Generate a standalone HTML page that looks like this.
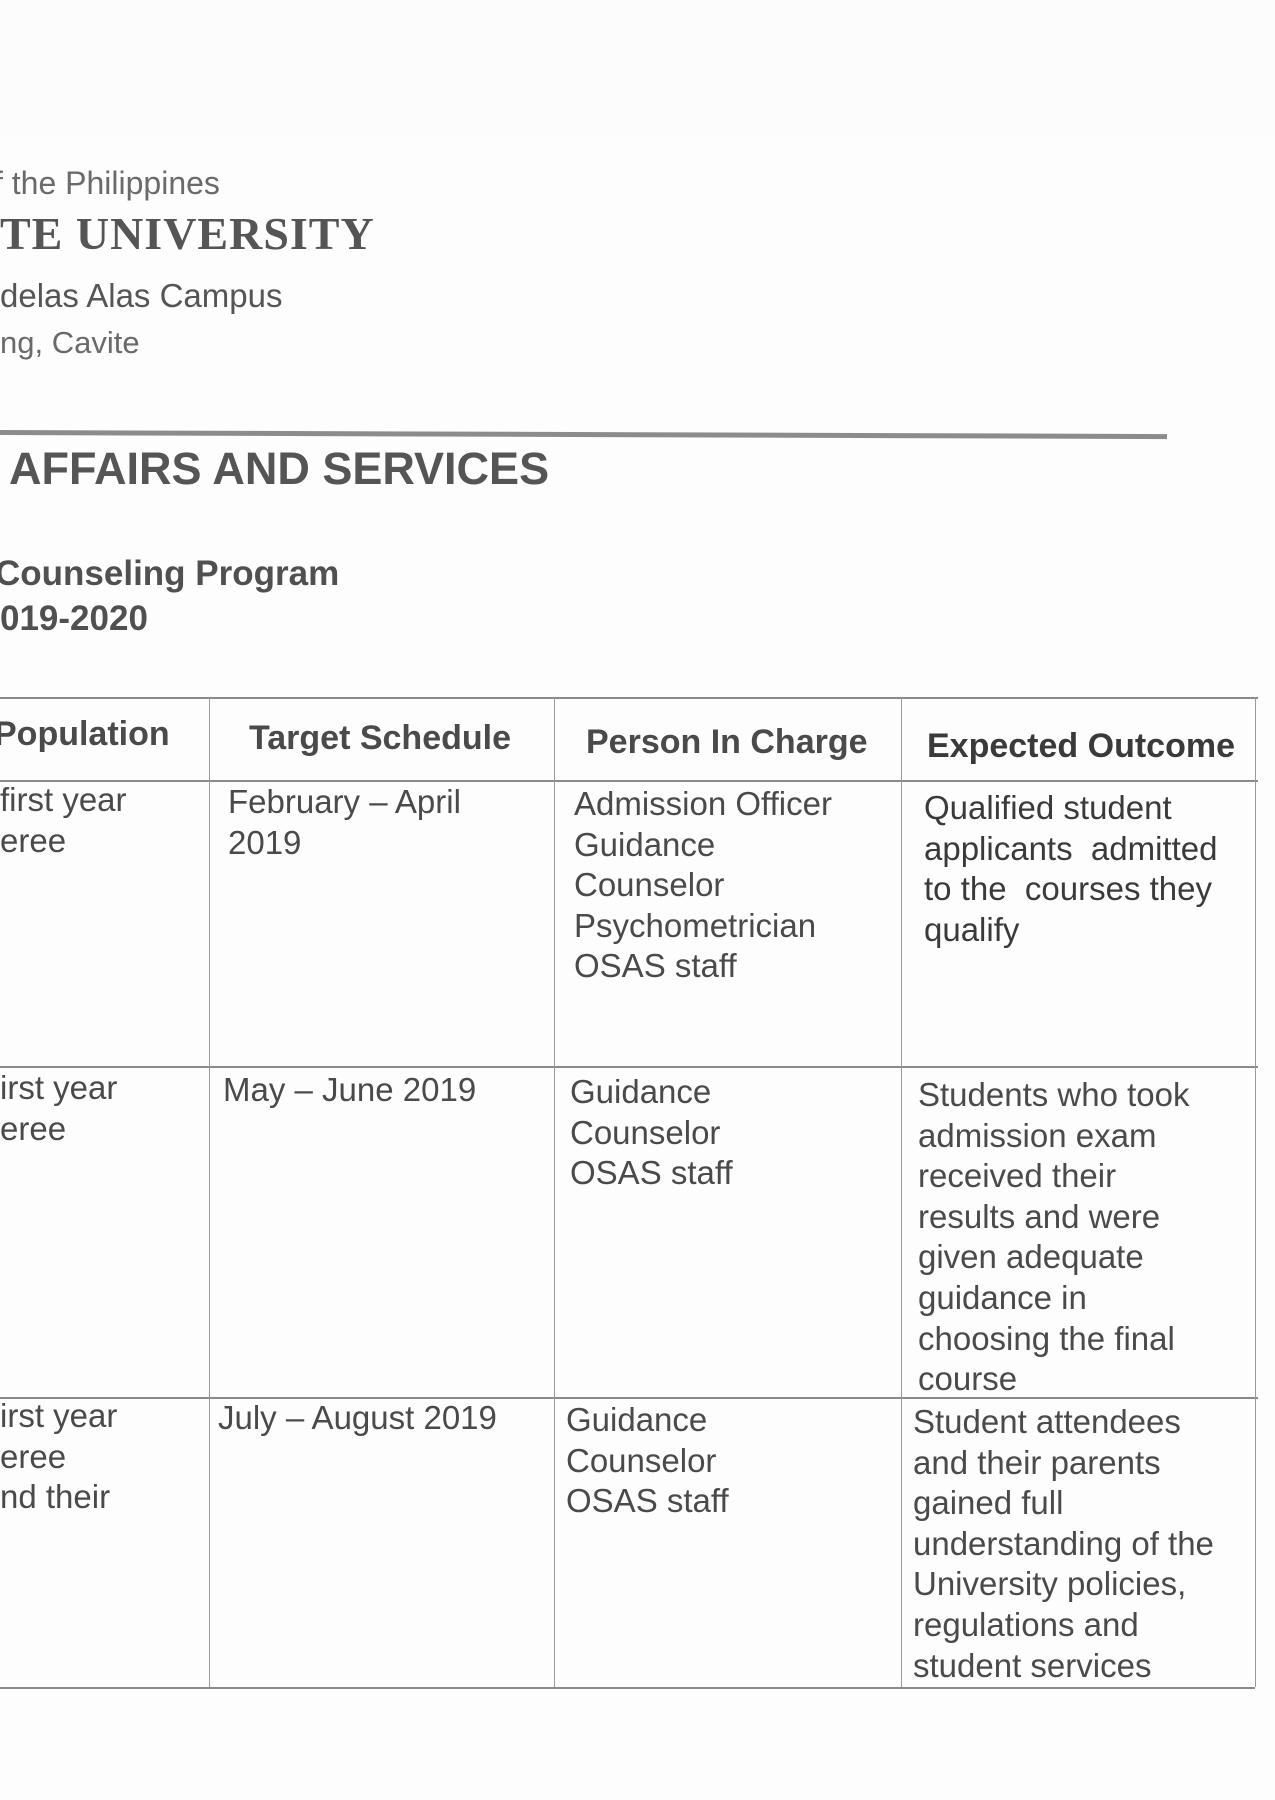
<!DOCTYPE html>
<html><head><meta charset="utf-8"><style>
html,body{margin:0;padding:0;}
body{width:1275px;height:1800px;background:#fcfcfc;position:relative;overflow:hidden;font-family:"Liberation Sans",Arial,sans-serif;color:#4a4a4a;}
.t{position:absolute;white-space:nowrap;font-size:33px;line-height:40.6px;}
.b{font-weight:bold;}
.hl{position:absolute;height:0;border-top:2px solid #8a8a8a;}
.vl{position:absolute;width:0;border-left:1.5px solid #9a9a9a;}
</style></head><body>
<div style="position:absolute;left:0;top:135px;width:1275px;height:1665px;background:#fdfdfd"></div>

<div class="t" style="left:-6px;top:163px;font-size:32px;color:#6a6a6a">f the Philippines</div>
<div class="t" style="left:0;top:214px;font-family:'Liberation Serif',serif;font-weight:bold;font-size:46px;letter-spacing:1px;color:#555">TE UNIVERSITY</div>
<div class="t" style="left:0;top:276px;font-size:33px;color:#555">delas Alas Campus</div>
<div class="t" style="left:0;top:323px;font-size:31px;color:#6a6a6a">ng, Cavite</div>

<div style="position:absolute;left:0;top:430px;width:1167px;height:5px;background:#8c8c8c;transform:rotate(0.2deg);transform-origin:left"></div>

<div class="t b" style="left:9px;top:445px;font-size:45px;line-height:48px;color:#555">AFFAIRS AND SERVICES</div>
<div class="t b" style="left:-5px;top:554px;font-size:35px;color:#505050">Counseling Program</div>
<div class="t b" style="left:0;top:599px;font-size:35px;color:#505050">019-2020</div>

<div class="hl" style="left:0;top:697px;width:1258px"></div>
<div class="hl" style="left:0;top:780px;width:1258px"></div>
<div class="hl" style="left:0;top:1066px;width:1258px"></div>
<div class="hl" style="left:0;top:1397px;width:1258px"></div>
<div class="hl" style="left:0;top:1687px;width:1255px"></div>
<div class="vl" style="left:209px;top:697px;height:990px"></div>
<div class="vl" style="left:554px;top:697px;height:990px"></div>
<div class="vl" style="left:901px;top:697px;height:990px"></div>
<div class="vl" style="left:1255px;top:697px;height:990px"></div>

<div class="t b" style="left:-6px;top:714px;font-size:34px">Population</div>
<div class="t b" style="left:249px;top:718px;font-size:34px">Target Schedule</div>
<div class="t b" style="left:586px;top:722px;font-size:34px">Person In Charge</div>
<div class="t b" style="left:927px;top:726px;font-size:34px;color:#3a3a3a">Expected Outcome</div>

<div class="t" style="left:0;top:780px">first year<br>eree</div>
<div class="t" style="left:228px;top:782px">February – April<br>2019</div>
<div class="t" style="left:574px;top:784px">Admission Officer<br>Guidance<br>Counselor<br>Psychometrician<br>OSAS staff</div>
<div class="t" style="left:924px;top:788px;color:#3a3a3a">Qualified student<br>applicants&nbsp; admitted<br>to the&nbsp; courses they<br>qualify</div>

<div class="t" style="left:0;top:1068px">irst year<br>eree</div>
<div class="t" style="left:223px;top:1070px">May – June 2019</div>
<div class="t" style="left:570px;top:1072px">Guidance<br>Counselor<br>OSAS staff</div>
<div class="t" style="left:918px;top:1075px">Students who took<br>admission exam<br>received their<br>results and were<br>given adequate<br>guidance in<br>choosing the final<br>course</div>

<div class="t" style="left:0;top:1396px">irst year<br>eree<br>nd their</div>
<div class="t" style="left:218px;top:1398px">July – August 2019</div>
<div class="t" style="left:566px;top:1400px">Guidance<br>Counselor<br>OSAS staff</div>
<div class="t" style="left:913px;top:1402px">Student attendees<br>and their parents<br>gained full<br>understanding of the<br>University policies,<br>regulations and<br>student services</div>
</body></html>
